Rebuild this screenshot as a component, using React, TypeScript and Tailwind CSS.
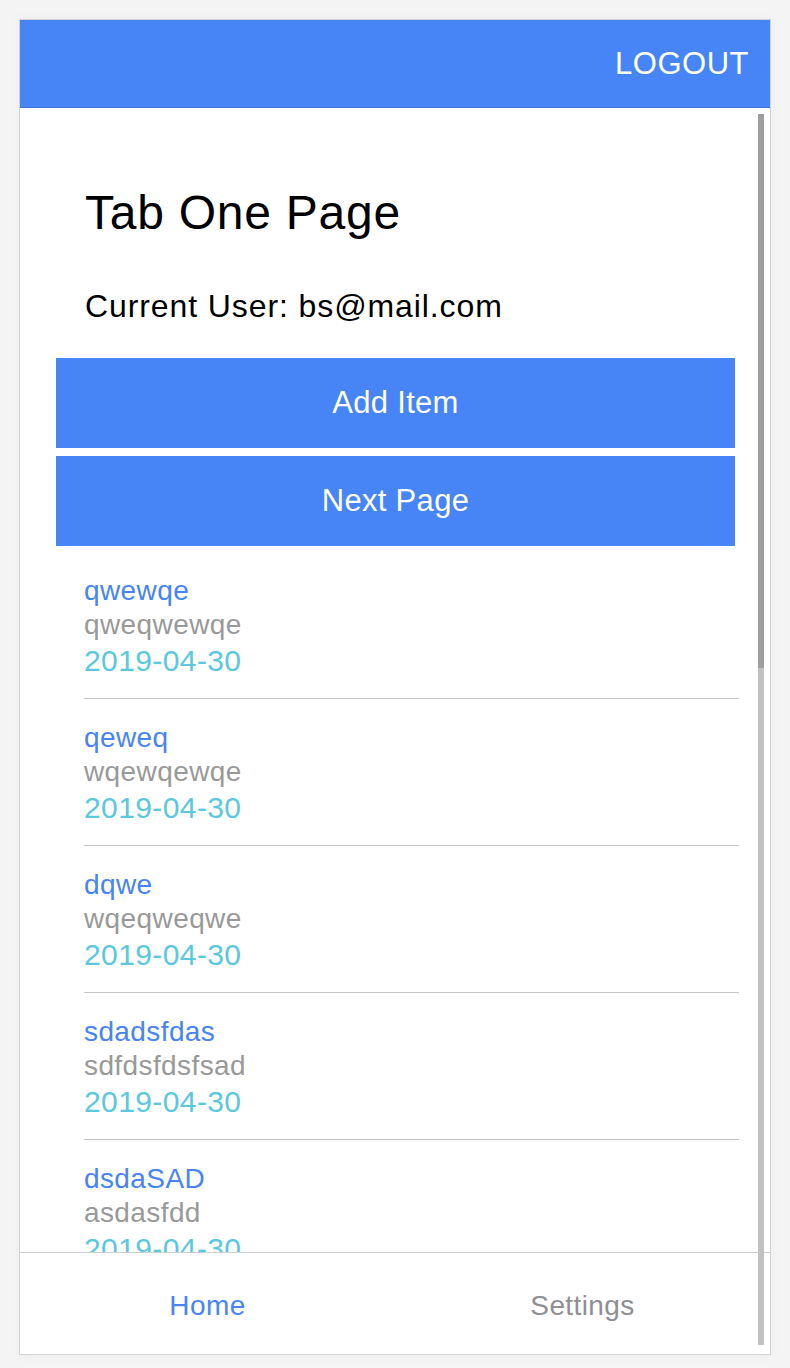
import React from "react";

const items = [
    { title: "qwewqe", body: "qweqwewqe", date: "2019-04-30" },
    { title: "qeweq", body: "wqewqewqe", date: "2019-04-30" },
    { title: "dqwe", body: "wqeqweqwe", date: "2019-04-30" },
    { title: "sdadsfdas", body: "sdfdsfdsfsad", date: "2019-04-30" },
    { title: "dsdaSAD", body: "asdasfdd", date: "2019-04-30" },
];

export default function App() {
    return (
        <div className="min-h-[1368px] w-full bg-[#f4f4f4] pt-[19px] pl-[19px] font-['Liberation_Sans',Arial,sans-serif]">
            <div className="relative flex h-[1336px] w-[752px] flex-col overflow-hidden border border-[#d2d2d2] bg-white shadow-[0_0_12px_rgba(0,0,0,0.04)]">
                {/* header */}
                <div className="flex h-[88px] shrink-0 items-center justify-end border-b border-[#3f72d6] bg-[#4784f5] pr-[21px]">
                    <span className="text-[31px] leading-none tracking-[0.5px] text-white">LOGOUT</span>
                </div>

                {/* scroll content */}
                <div className="flex-1 overflow-hidden">
                    <div className="pt-[81px]">
                        <h1 className="pl-[65px] text-[48px] leading-none tracking-[0.75px] text-black">Tab One Page</h1>
                        <p className="mt-[53px] pl-[65px] text-[32px] leading-none tracking-[0.9px] text-black">Current User: bs@mail.com</p>

                        <div className="mt-[36px] flex flex-col gap-[8px] pl-[36px] pr-[35px]">
                            <button className="flex h-[90px] items-center justify-center bg-[#4784f5] text-[31px] tracking-[0.3px] text-white">
                                Add Item
                            </button>
                            <button className="flex h-[90px] items-center justify-center bg-[#4784f5] text-[31px] tracking-[0.3px] text-white">
                                Next Page
                            </button>
                        </div>

                        <div className="mt-[6px] pl-[64px] pr-[31px]">
                            {items.map((item) => (
                                <div key={item.title} className="border-b border-[#c4c4c8] pt-[22px] pb-[18px] tracking-[0.4px]">
                                    <div className="text-[28px] leading-[34px] text-[#4784f5]">{item.title}</div>
                                    <div className="text-[28px] leading-[34px] text-[#999999]">{item.body}</div>
                                    <div className="text-[30px] leading-[38px] text-[#5ac8e0]">{item.date}</div>
                                </div>
                            ))}
                        </div>
                    </div>
                </div>

                {/* tab bar */}
                <div className="flex h-[102px] shrink-0 border-t border-[#cfcfcf] bg-white">
                    <div className="flex flex-1 items-center justify-center pt-[4px] text-[28px] tracking-[0.4px] text-[#4784f5]">Home</div>
                    <div className="flex flex-1 items-center justify-center pt-[4px] text-[28px] tracking-[0.4px] text-[#8e8e93]">Settings</div>
                </div>

                {/* scrollbar overlay */}
                <div className="absolute left-[738px] top-[94px] flex h-[1231px] w-[6px] flex-col">
                    <div className="h-[554px] bg-[#9e9e9e]" />
                    <div className="flex-1 bg-[#c1c1c1]" />
                </div>
            </div>
        </div>
    );
}
